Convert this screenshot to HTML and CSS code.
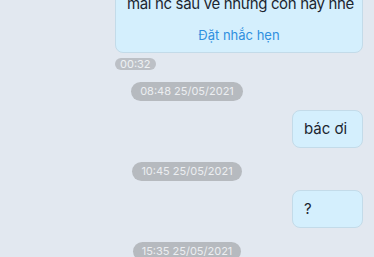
FILE: index.html
```html
<!DOCTYPE html>
<html lang="vi">
<head>
    <meta charset="UTF-8">
    <meta name="viewport" content="width=device-width, initial-scale=1.0">
    <title>Tin nhắn</title>
    <link rel="stylesheet" href="styles.css">
</head>
<body>
    <div class="chat">
        <div class="msg-row">
            <div class="bubble bubble-reminder">
                <p class="bubble-text">mai nc sau về những con này nhé</p>
                <a class="reminder-link" href="#">Đặt nhắc hẹn</a>
            </div>
        </div>
        <div class="time-row">
            <span class="time-badge">00:32</span>
        </div>

        <div class="date-row">
            <span class="date-pill">08:48 25/05/2021</span>
        </div>
        <div class="msg-row">
            <div class="bubble">bác ơi</div>
        </div>

        <div class="date-row">
            <span class="date-pill">10:45 25/05/2021</span>
        </div>
        <div class="msg-row">
            <div class="bubble">?</div>
        </div>

        <div class="date-row">
            <span class="date-pill">15:35 25/05/2021</span>
        </div>
    </div>
</body>
</html>
```

FILE: styles.css
```css
body {
    margin: 0;
    background-color: #e2e8f0;
    font-family: Inter, 'Noto Sans', sans-serif;
    color: #1c2630;
    overflow: hidden;
}

.chat {
    /* danh sách đã cuộn một đoạn */
    margin-top: -18px;
    padding: 0 11px 0 0;
}

.msg-row {
    display: flex;
    justify-content: flex-end;
}

.bubble {
    min-width: 47px;
    padding: 9px 11px;
    font-size: 15px;
    line-height: 18px;
    background: #d4effd;
    border: 1px solid #c3dbe9;
    border-radius: 8px;
}

.bubble-reminder {
    width: 224px;
    padding: 11px 11px 8px;
}

.bubble-text {
    margin: 0;
    font-size: 15px;
    line-height: 20px;
    letter-spacing: -0.35px;
    white-space: nowrap;
}

.reminder-link {
    display: block;
    margin-top: 12px;
    text-align: center;
    font-size: 13px;
    line-height: 18px;
    color: #2f8fdf;
    text-decoration: none;
}

.time-row {
    display: flex;
    padding-left: 115px;
    margin-top: 5px;
}

.time-badge {
    padding: 0 5px;
    font-size: 11px;
    line-height: 12px;
    color: #eef1f4;
    background: #bcc0c6;
    border-radius: 6px;
}

.date-row {
    display: flex;
    justify-content: center;
    padding-left: 11px;
    margin: 14px 0 9px;
}

.time-row + .date-row {
    margin-top: 12px;
}

.date-pill {
    padding: 0 9px;
    font-size: 11px;
    line-height: 19px;
    color: #eceef1;
    background: #b6babf;
    border-radius: 10px;
}
```
